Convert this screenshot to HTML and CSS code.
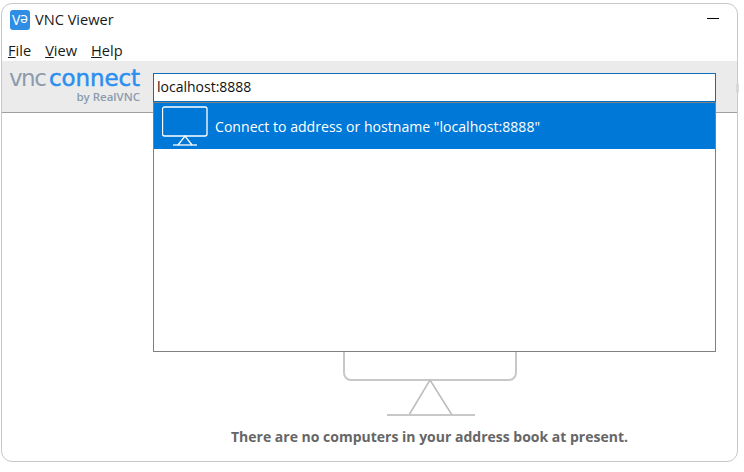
FILE: index.html
```html
<!DOCTYPE html>
<html lang="en">
<head>
    <meta charset="UTF-8">
    <title>VNC Viewer</title>
    <link rel="stylesheet" href="styles.css">
</head>
<body>
    <div class="window">
        <div class="titlebar">
            <span class="app-icon">V<span class="app-icon-e">e</span></span>
            <span class="app-title">VNC Viewer</span>
            <span class="minimize"></span>
        </div>

        <div class="menubar">
            <span class="menu-item"><u>F</u>ile</span>
            <span class="menu-item"><u>V</u>iew</span>
            <span class="menu-item"><u>H</u>elp</span>
        </div>

        <div class="toolbar">
            <div class="logo">
                <div class="logo-name"><span class="logo-vnc">vnc</span><span class="logo-connect">connect</span></div>
                <div class="logo-by">by RealVNC</div>
            </div>
            <div class="address">localhost:8888</div>
            <span class="toolbar-handle"></span>
        </div>

        <div class="main">
            <svg class="big-monitor" width="176" height="302" viewBox="0 0 176 302">
                <rect x="2" y="-30" width="172" height="296" rx="7" />
                <path class="big-stand" d="M67 301 L88 266 L110 301" />
                <path d="M45 301 H133" />
            </svg>
            <p class="empty-text">There are no computers in your address book at present.</p>
        </div>

        <!-- autocomplete list drops over the main area -->
        <div class="dropdown">
            <div class="dropdown-row">
                <svg class="row-icon" width="46" height="41" viewBox="0 0 46 41">
                    <rect x="0.5" y="1" width="44.5" height="29" rx="2" />
                    <path d="M16 39 L23 30 L30 39" />
                    <path d="M11 39 H35" />
                </svg>
                <span class="row-text">Connect to address or hostname "localhost:8888"</span>
            </div>
        </div>
    </div>
</body>
</html>
```

FILE: styles.css
```css
* {
    box-sizing: border-box;
}
body {
    margin: 0;
    width: 744px;
    height: 472px;
    background: #ffffff;
    overflow: hidden;
    font-family: "Open Sans", "Noto Sans", sans-serif;
    color: #1a1a1a;
}
.window {
    position: relative;
    display: flex;
    flex-direction: column;
    width: 737px;
    height: 459px;
    margin: 3px 0 0 1px;
    background: #ffffff;
    border: 1px solid #c8c8c8;
    border-radius: 11px;
}
.titlebar {
    display: flex;
    align-items: center;
    height: 31px;
    padding: 0 18px 0 8px;
}
.app-icon {
    display: flex;
    justify-content: center;
    align-items: center;
    width: 20px;
    height: 20px;
    background: #2f8de4;
    border-radius: 3px;
    color: #ffffff;
    font-size: 14px;
    line-height: 20px;
}
.app-icon-e {
    transform: rotate(180deg);
}
.app-title {
    margin: 0 0 2px 5px;
    font-size: 14.6px;
}
.minimize {
    width: 12px;
    height: 1px;
    margin: 0 0 2px auto;
    background: #000000;
}
.menubar {
    display: flex;
    align-items: center;
    gap: 14px;
    height: 26px;
    padding: 4px 0 0 6px;
    font-size: 14.6px;
}
.toolbar {
    position: relative;
    display: flex;
    height: 52px;
    background: #ebebeb;
    border-bottom: 1px solid #a0a0a0;
}
.logo {
    width: 131px;
    margin-left: 7px;
    padding-top: 5px;
    margin-right: 1px;
    text-align: right;
}
.logo-name {
    display: flex;
    justify-content: space-between;
    height: 24px;
    font-family: "DejaVu Sans", sans-serif;
    font-size: 23px;
    line-height: 24px;
    white-space: nowrap;
}
.logo-vnc {
    color: #8c9bad;
    letter-spacing: -1.5px;
}
.logo-connect {
    color: #2b8ff0;
    letter-spacing: -0.1px;
    -webkit-text-stroke: 0.5px #2b8ff0;
}
.logo-by {
    color: #8c9bad;
    font-size: 11.5px;
    font-weight: 600;
    line-height: 14px;
}
.address {
    width: 563px;
    height: 29px;
    margin: 12px 0 0 12px;
    padding-left: 3px;
    background: #ffffff;
    border: 1px solid #0a6ebd;
    color: #111111;
    font-size: 14px;
    line-height: 26px;
}
.toolbar-handle {
    position: absolute;
    top: 22px;
    right: -2px;
    width: 3px;
    height: 10px;
    background: #d8d8d8;
    border-radius: 2px;
}
.main {
    display: flex;
    flex: 1;
    flex-direction: column;
    align-items: center;
    padding-left: 120px;
}
.big-monitor {
    display: block;
    margin-top: 1px;
}
.big-monitor rect,
.big-monitor path {
    fill: none;
    stroke: #c8c8c8;
    stroke-width: 2;
}
.big-monitor .big-stand {
    stroke: #bcbcbc;
    stroke-width: 1.5;
}
.empty-text {
    margin: 11px 0 0;
    color: #666666;
    font-size: 14px;
    font-weight: bold;
}
.dropdown {
    position: absolute;
    top: 98px;
    left: 151px;
    width: 563px;
    height: 250px;
    background: #ffffff;
    border: 1px solid #808080;
}
.dropdown-row {
    display: flex;
    align-items: flex-start;
    gap: 7px;
    height: 46px;
    padding: 3px 0 0 8px;
    background: #0078d7;
    color: #ffffff;
}
.row-icon rect,
.row-icon path {
    fill: none;
    stroke: #ffffff;
    stroke-width: 1.3;
}
.row-text {
    font-size: 14.1px;
    line-height: 42px;
}
```
